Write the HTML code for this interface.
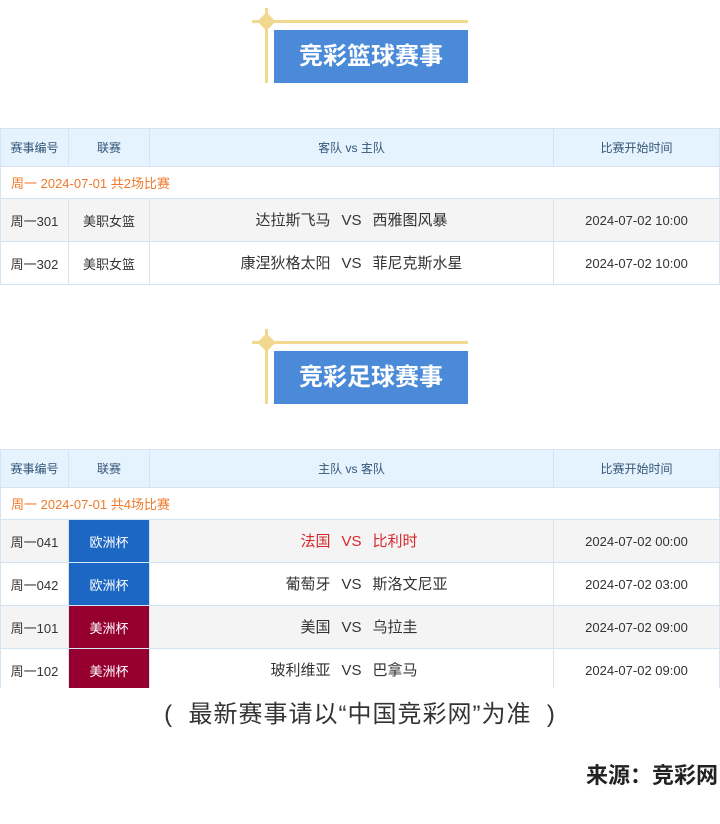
<!DOCTYPE html>
<html><head><meta charset="utf-8"><style>
*{margin:0;padding:0;box-sizing:border-box}
body{width:720px;height:824px;background:#fff;font-family:"Liberation Sans","Noto Sans CJK SC",sans-serif;position:relative;overflow:hidden}
.hl{position:absolute;left:252px;width:216px;height:3px;background:#f2d88f}
.vl{position:absolute;left:265px;width:3px;background:#f2d88f}
.dm{position:absolute;left:260px;width:13px;height:13px;background:#f2d88f;border-radius:3px;transform:rotate(45deg)}
.box{position:absolute;left:274px;width:194px;height:53px;background:#4a8ad9;color:#fff;font-size:24px;font-weight:bold;text-align:center;line-height:53px}
table{position:absolute;left:0;width:719px;border-collapse:collapse;table-layout:fixed;font-size:13px;color:#333}
td{border:1px solid #d4e4f2;text-align:center;padding:0}
tr.h td{background:#e5f3fe;color:#335577;height:38px;font-size:12px}
tr.d td{text-align:left;color:#f07a2a;height:32px;padding-left:10px;font-size:13px}
tr.r td{height:43px}
tr.g td{background:#f4f4f4}
.vs{display:flex;justify-content:center;align-items:center;font-size:15px;color:#333;line-height:20px;padding-top:2px}
.vs span:first-child{width:180px;text-align:right}
.vs span:nth-child(2){width:42px;text-align:center}
.vs span:last-child{width:180px;text-align:left}
.red{color:#d9262c!important}
.eu{background:#1d67c4!important;color:#fff}
.am{background:#960030!important;color:#fff}
</style></head><body>
<div class="hl" style="top:20px"></div><div class="vl" style="top:8px;height:75px"></div><div class="dm" style="top:15px"></div>
<div class="box" style="top:30px">竞彩篮球赛事</div>
<table style="top:128px">
<colgroup><col style="width:68px"><col style="width:81px"><col style="width:404px"><col style="width:166px"></colgroup>
<tr class="h"><td>赛事编号</td><td>联赛</td><td>客队 vs 主队</td><td>比赛开始时间</td></tr>
<tr class="d"><td colspan="4">周一 2024-07-01 共2场比赛</td></tr>
<tr class="r g"><td>周一301</td><td>美职女篮</td><td><div class="vs"><span>达拉斯飞马</span><span>VS</span><span>西雅图风暴</span></div></td><td>2024-07-02 10:00</td></tr>
<tr class="r"><td>周一302</td><td>美职女篮</td><td><div class="vs"><span>康涅狄格太阳</span><span>VS</span><span>菲尼克斯水星</span></div></td><td>2024-07-02 10:00</td></tr>
</table>
<div class="hl" style="top:341px"></div><div class="vl" style="top:329px;height:75px"></div><div class="dm" style="top:336px"></div>
<div class="box" style="top:351px">竞彩足球赛事</div>
<table style="top:449px">
<colgroup><col style="width:68px"><col style="width:81px"><col style="width:404px"><col style="width:166px"></colgroup>
<tr class="h"><td>赛事编号</td><td>联赛</td><td>主队 vs 客队</td><td>比赛开始时间</td></tr>
<tr class="d"><td colspan="4">周一 2024-07-01 共4场比赛</td></tr>
<tr class="r g"><td>周一041</td><td class="eu">欧洲杯</td><td><div class="vs red"><span>法国</span><span>VS</span><span>比利时</span></div></td><td>2024-07-02 00:00</td></tr>
<tr class="r"><td>周一042</td><td class="eu">欧洲杯</td><td><div class="vs"><span>葡萄牙</span><span>VS</span><span>斯洛文尼亚</span></div></td><td>2024-07-02 03:00</td></tr>
<tr class="r g"><td>周一101</td><td class="am">美洲杯</td><td><div class="vs"><span>美国</span><span>VS</span><span>乌拉圭</span></div></td><td>2024-07-02 09:00</td></tr>
<tr class="r"><td>周一102</td><td class="am">美洲杯</td><td><div class="vs"><span>玻利维亚</span><span>VS</span><span>巴拿马</span></div></td><td>2024-07-02 09:00</td></tr>
</table>
<div style="position:absolute;top:688px;left:0;width:720px;height:40px;background:#fff"></div>
<div style="position:absolute;top:694px;left:0;width:720px;text-align:center;font-size:24px;letter-spacing:1px;color:#333;white-space:pre">(  最新赛事请以“中国竞彩网”为准  )</div>
<div style="position:absolute;top:758px;right:2px;font-size:22px;font-weight:bold;color:#222">来源：竞彩网</div>
</body></html>
